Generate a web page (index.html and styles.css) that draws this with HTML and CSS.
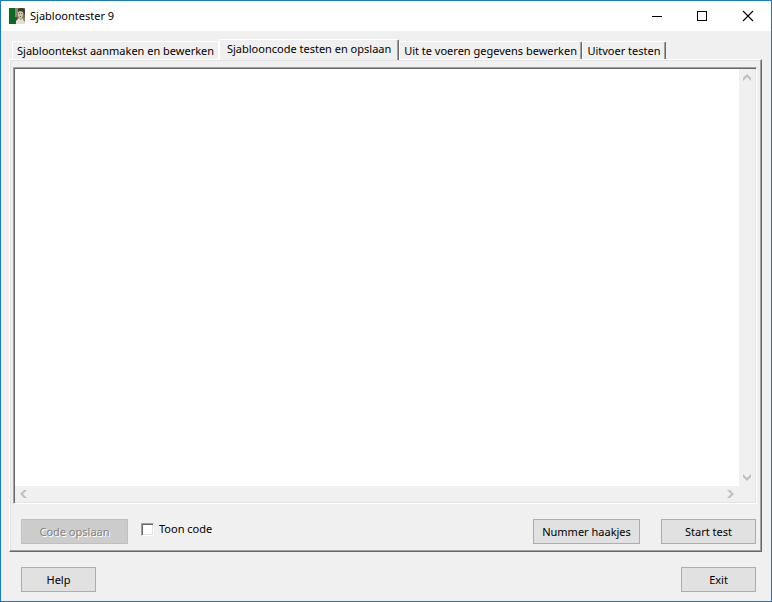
FILE: index.html
```
<!DOCTYPE html>
<html lang="nl">
<head>
<meta charset="utf-8">
<title>Sjabloontester 9</title>
<link rel="stylesheet" href="styles.css">
</head>
<body>
<div class="window">
  <header class="titlebar">
    <svg class="app-icon" width="16" height="16" viewBox="0 0 16 16" aria-hidden="true">
      <rect width="16" height="16" fill="#77735c"/>
      <rect width="6" height="16" fill="#076b22"/>
      <path d="M6 0h3v6l-1 4H6z" fill="#8b8974"/>
      <path d="M9 1l2-1h3l2 2v5l-2-3-3-1-2 2z" fill="#3f3a2c"/>
      <path d="M9 4l2-1 3 1v3l-1 3-2 1-2-3z" fill="#cfc3aa"/>
      <path d="M10 5h1v1h-1zM12 5h1v1h-1zM11 8h1v1h-1z" fill="#75634b"/>
      <path d="M7 16v-4l3-2 2 2 1-2 3 3v3z" fill="#e6e1d4"/>
      <path d="M6 9h2l1 2-2 2v3H6z" fill="#514d3c"/>
      <path d="M14 10h2v4l-2-2z" fill="#8d806a"/>
    </svg>
    <h1 class="title">Sjabloontester 9</h1>
    <div class="window-controls">
      <button class="control" type="button" aria-label="Minimaliseren"><svg width="12" height="12" viewBox="0 0 12 12" shape-rendering="crispEdges"><path d="M2 6.500h10" stroke="#000"/></svg></button>
      <button class="control" type="button" aria-label="Maximaliseren"><svg width="12" height="12" viewBox="0 0 12 12" shape-rendering="crispEdges"><path d="M1.500 1.500h9v9h-9z" fill="none" stroke="#000"/></svg></button>
      <button class="control" type="button" aria-label="Sluiten"><svg width="12" height="12" viewBox="0 0 12 12"><path d="M1 1l10 10M11 1L1 11" stroke="#000" stroke-width="1.100"/></svg></button>
    </div>
  </header>
  <main class="content">
    <div class="tabs" role="tablist">
      <button class="tab tab-before" type="button" role="tab">Sjabloontekst aanmaken en bewerken</button>
      <button class="tab tab-active" type="button" role="tab" aria-selected="true">Sjablooncode testen en opslaan</button>
      <button class="tab tab-after" type="button" role="tab">Uit te voeren gegevens bewerken</button>
      <button class="tab" type="button" role="tab">Uitvoer testen</button>
    </div>
    <section class="panel" role="tabpanel">
      <div class="editor">
        <textarea class="code" aria-label="Sjablooncode"></textarea>
        <div class="scroll scroll-v">
          <svg width="8" height="7" viewBox="0 0 8 7"><path d="M0 4l4-4 4 4v3L4 3 0 7z" fill="#bfbfbf"/></svg>
          <svg width="8" height="7" viewBox="0 0 8 7"><path d="M0 3l4 4 4-4V0L4 4 0 0z" fill="#bfbfbf"/></svg>
        </div>
        <div class="scroll scroll-h">
          <svg width="7" height="8" viewBox="0 0 7 8"><path d="M4 0L0 4l4 4h3L3 4l4-4z" fill="#bfbfbf"/></svg>
          <svg width="7" height="8" viewBox="0 0 7 8"><path d="M3 0l4 4-4 4H0l4-4-4-4z" fill="#bfbfbf"/></svg>
        </div>
      </div>
      <div class="actions">
        <button class="button button-wide" type="button" disabled>Code opslaan</button>
        <label class="check"><input class="box" type="checkbox">Toon code</label>
        <span class="spacer"></span>
        <button class="button button-wide" type="button">Nummer haakjes</button>
        <button class="button button-start" type="button">Start test</button>
      </div>
    </section>
    <footer class="footer">
      <button class="button" type="button">Help</button>
      <button class="button" type="button">Exit</button>
    </footer>
  </main>
</div>
</body>
</html>
```
FILE: styles.css
```
* { box-sizing: border-box; }

body {
  margin: 0;
  font: 11px/16px "Noto Sans", "Open Sans", sans-serif;
  color: #000;
}

button {
  font: inherit;
  color: inherit;
}

svg { display: block; }

.window {
  display: flex;
  flex-direction: column;
  height: 100vh;
  border: 1px solid #1979ca;
  background: #f0f0f0;
}

.titlebar {
  display: flex;
  align-items: center;
  height: 30px;
  padding-left: 8px;
  background: #fff;
}

.title {
  margin: 0 auto 0 5px;
  font-size: 11px;
  font-weight: 400;
}

.window-controls { display: flex; }

.control {
  display: flex;
  align-items: center;
  justify-content: center;
  width: 46px;
  height: 30px;
  padding: 0;
  border: 0;
  background: none;
}

.content {
  display: flex;
  flex: 1;
  flex-direction: column;
  padding: 8px 9px 9px 8px;
}

.tabs {
  display: flex;
  align-items: flex-end;
  height: 20px;
  padding-left: 3px;
}

.tab {
  height: 18px;
  padding: 0 4px;
  border: 1px solid;
  border-color: #fff #696969 #f0f0f0 #fff;
  border-bottom: 0;
  border-radius: 2px 2px 0 0;
  background: #f0f0f0;
  box-shadow: inset -1px 0 #a0a0a0;
  white-space: nowrap;
}

.tab-before {
  min-width: 207px;
  border-right-color: #fff;
  box-shadow: none;
}

.tab-active {
  z-index: 1;
  height: 21px;
  min-width: 180px;
  margin-bottom: -1px;
  padding-bottom: 3px;
}

.tab-after { min-width: 182px; }

.tab:last-child { min-width: 84px; }

.panel {
  display: flex;
  flex: 1;
  flex-direction: column;
  gap: 15px;
  padding: 7px 4px 7px 3px;
  border: 1px solid;
  border-color: #fff #696969 #696969 #fff;
  box-shadow: inset -1px -1px #a0a0a0, inset 1px 1px #e3e3e3;
}

.editor {
  display: grid;
  flex: 1;
  grid-template: 1fr 16px / 1fr 16px;
  padding: 1px;
  border: 1px solid;
  border-color: #a0a0a0 #fff #fff #a0a0a0;
  box-shadow: inset 1px 1px #696969, inset -1px -1px #e3e3e3;
}

.code {
  width: 100%;
  height: 100%;
  padding: 2px;
  border: 0;
  outline: 0;
  resize: none;
  overflow: hidden;
  background: #fff;
}

.scroll {
  display: flex;
  align-items: center;
  justify-content: space-between;
}

.scroll-v {
  flex-direction: column;
  padding: 5px 0;
}

.scroll-h { padding: 0 5px; }

.actions {
  display: flex;
  padding: 0 1px 0 8px;
}

.button {
  width: 75px;
  height: 25px;
  padding: 0;
  border: 1px solid #adadad;
  background: #e1e1e1;
}

.button:disabled {
  border-color: #bfbfbf;
  background: #ccc;
  color: #838383;
  text-shadow: 1px 1px #fff;
}

.button-wide { width: 107px; }

.button-start {
  width: 95px;
  margin-left: 21px;
}

.check {
  display: flex;
  align-items: center;
  gap: 5px;
  height: 20px;
  margin-left: 13px;
}

.box {
  width: 13px;
  height: 13px;
  margin: 0;
  appearance: none;
  border: 1px solid;
  border-color: #a0a0a0 #fff #fff #a0a0a0;
  background: #fff;
  box-shadow: inset 1px 1px #696969, inset -1px -1px #e3e3e3;
}

.box:checked { background: #fff linear-gradient(#000, #000) center / 5px 5px no-repeat; }

.spacer { flex: 1; }

.footer {
  display: flex;
  justify-content: space-between;
  margin-top: 15px;
  padding: 0 6px 0 12px;
}
```
